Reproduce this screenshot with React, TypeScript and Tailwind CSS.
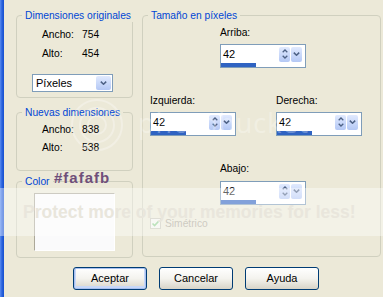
import React from 'react';

const Chevron = ({ up = false, w = 7, h = 4 }: { up?: boolean; w?: number; h?: number }) => (
  <svg viewBox="0 0 7 4" width={w} height={h}>
    <path
      d={up ? 'M0.8 3.4 L3.5 0.8 L6.2 3.4' : 'M0.8 0.6 L3.5 3.2 L6.2 0.6'}
      fill="none"
      stroke="#4d6185"
      strokeWidth={1.5}
    />
  </svg>
);

const xpBtn = 'rounded-[2px] bg-gradient-to-b from-[#e1eafe] to-[#b4c8f5]';

const SpinBox = ({ value, percent }: { value: number; percent: number }) => (
  <div className="flex h-[24px] w-[86px] flex-col border border-[#7f9db9] bg-white">
    <div className="flex h-[18px] items-center">
      <span className="flex-1 pl-[2px] text-[11px] leading-none">{value}</span>
      <div className={`flex h-[15px] w-[11px] flex-col items-center justify-center gap-[2px] ${xpBtn}`}>
        <Chevron up w={6} h={4} />
        <Chevron w={6} h={4} />
      </div>
      <div className={`ml-px mr-[3px] flex h-[15px] w-[11px] items-center justify-center ${xpBtn}`}>
        <Chevron />
      </div>
    </div>
    <div className="mt-auto h-[4px] bg-[#2f63c2]" style={{ width: `${percent}%` }} />
  </div>
);

const Group = ({ title, className, children }: { title: string; className: string; children?: React.ReactNode }) => (
  <fieldset className={`min-w-0 rounded-[4px] border border-[#d0d0bf] ${className}`}>
    <legend className="ml-[5px] whitespace-nowrap px-[3px] leading-[13px] text-[#0046d5]">{title}</legend>
    {children}
  </fieldset>
);

const Button = ({ label, isDefault = false }: { label: string; isDefault?: boolean }) => (
  <button
    className={`h-[23px] w-[74px] rounded-[3px] border border-[#003c74] bg-gradient-to-b from-[#ffffff] via-[#f4f3ee] to-[#d8d4c8] text-[11px] ${
      isDefault ? 'shadow-[inset_0_0_0_1px_#a9c0f0,inset_0_-1px_0_2px_#c8d8f8]' : ''
    }`}
  >
    {label}
  </button>
);

export default function App() {
  return (
    <div className="relative flex h-[297px] w-[383px] overflow-hidden bg-[#ece9d8] font-['Liberation_Sans',Arial,sans-serif] text-[10.25px] text-black">
      {/* window frame */}
      <div className="w-[4px] bg-gradient-to-r from-[#5a8cf0] via-[#2a62dc] to-[#1550d0]" />

      <div className="flex flex-1 flex-col pl-[12px] pt-[9px]">
        <div className="flex gap-[9px]">
          {/* Left column */}
          <div className="flex w-[117px] flex-col">
            <Group title="Dimensiones originales" className="h-[89px]">
              <div className="mt-[6px] grid grid-cols-[40px_auto] gap-y-[6px] pl-[25px] leading-[13px]">
                <span>Ancho:</span>
                <span>754</span>
                <span>Alto:</span>
                <span>454</span>
              </div>
              <div className="ml-[15px] mt-[14px] flex h-[18px] w-[81px] items-center border border-[#7f9db9] bg-white">
                <span className="flex-1 pl-[3px] text-[11px]">Píxeles</span>
                <div className={`mr-px flex h-[14px] w-[15px] items-center justify-center ${xpBtn}`}>
                  <Chevron />
                </div>
              </div>
            </Group>

            <Group title="Nuevas dimensiones" className="mt-[8px] h-[65px]">
              <div className="mt-[4px] grid grid-cols-[40px_auto] gap-y-[5px] pl-[25px] leading-[13px]">
                <span>Ancho:</span>
                <span>838</span>
                <span>Alto:</span>
                <span>538</span>
              </div>
            </Group>

            <Group title="Color" className="mt-[4px] h-[83px]">
              <div className="ml-[17px] mt-[5px] h-[58px] w-[81px] border border-b-white border-l-[#aca899] border-r-white border-t-[#aca899] bg-[#fafafb]" />
            </Group>
          </div>

          {/* Right column */}
          <Group title="Tamaño en píxeles" className="h-[248px] w-[239px]">
            <div className="flex flex-col pl-[7px] leading-[13px]">
              <div className="ml-[70px] mt-[4px] flex flex-col gap-[5px]">
                <span>Arriba:</span>
                <SpinBox value={42} percent={42} />
              </div>
              <div className="mt-[26px] flex gap-[40px]">
                <div className="flex flex-col gap-[5px]">
                  <span>Izquierda:</span>
                  <SpinBox value={42} percent={42} />
                </div>
                <div className="flex flex-col gap-[5px]">
                  <span>Derecha:</span>
                  <SpinBox value={42} percent={42} />
                </div>
              </div>
              <div className="ml-[70px] mt-[26px] flex flex-col gap-[6px]">
                <span>Abajo:</span>
                <SpinBox value={42} percent={42} />
              </div>
              <div className="mt-[12px] flex items-center gap-[4px] text-[#aca899]">
                <div className="flex h-[11px] w-[11px] items-center justify-center border border-[#cac8bb] bg-[#f4f3ee]">
                  <svg viewBox="0 0 9 9" width={9} height={9}>
                    <path d="M1.5 4.5 L3.6 6.6 L7.6 2.2" fill="none" stroke="#8fcf8f" strokeWidth={1.6} />
                  </svg>
                </div>
                <span>Simétrico</span>
              </div>
            </div>
          </Group>
        </div>

        <div className="ml-[57px] mt-[9px] flex gap-[12px]">
          <Button label="Aceptar" isDefault />
          <Button label="Cancelar" />
          <Button label="Ayuda" />
        </div>
      </div>

      {/* annotation */}
      <span className="absolute left-[54px] top-[170px] text-[15px] font-bold leading-[16px] tracking-[1px] text-[#6f4f7a]">
        #fafafb
      </span>

      {/* photobucket watermark */}
      <span className="pointer-events-none absolute left-[138px] top-[109px] font-['Open_Sans',sans-serif] text-[27px] leading-[28px] tracking-[1px] text-white/30">
        photobucket
      </span>
      <svg className="pointer-events-none absolute left-[70px] top-[98px]" width={54} height={54} viewBox="0 0 54 54">
        <circle cx={27} cy={27} r={25} fill="none" stroke="white" strokeOpacity={0.3} strokeWidth={2} />
        <circle cx={27} cy={27} r={17} fill="none" stroke="white" strokeOpacity={0.3} strokeWidth={2} />
        <circle cx={27} cy={27} r={9} fill="none" stroke="white" strokeOpacity={0.3} strokeWidth={2} />
      </svg>
      <div className="pointer-events-none absolute left-0 top-[188px] flex h-[48px] w-full items-center bg-white/40 pl-[23px]">
        <span className="text-[17.5px] font-bold text-[#e9e6dc]">Protect more of your memories for less!</span>
      </div>
    </div>
  );
}
